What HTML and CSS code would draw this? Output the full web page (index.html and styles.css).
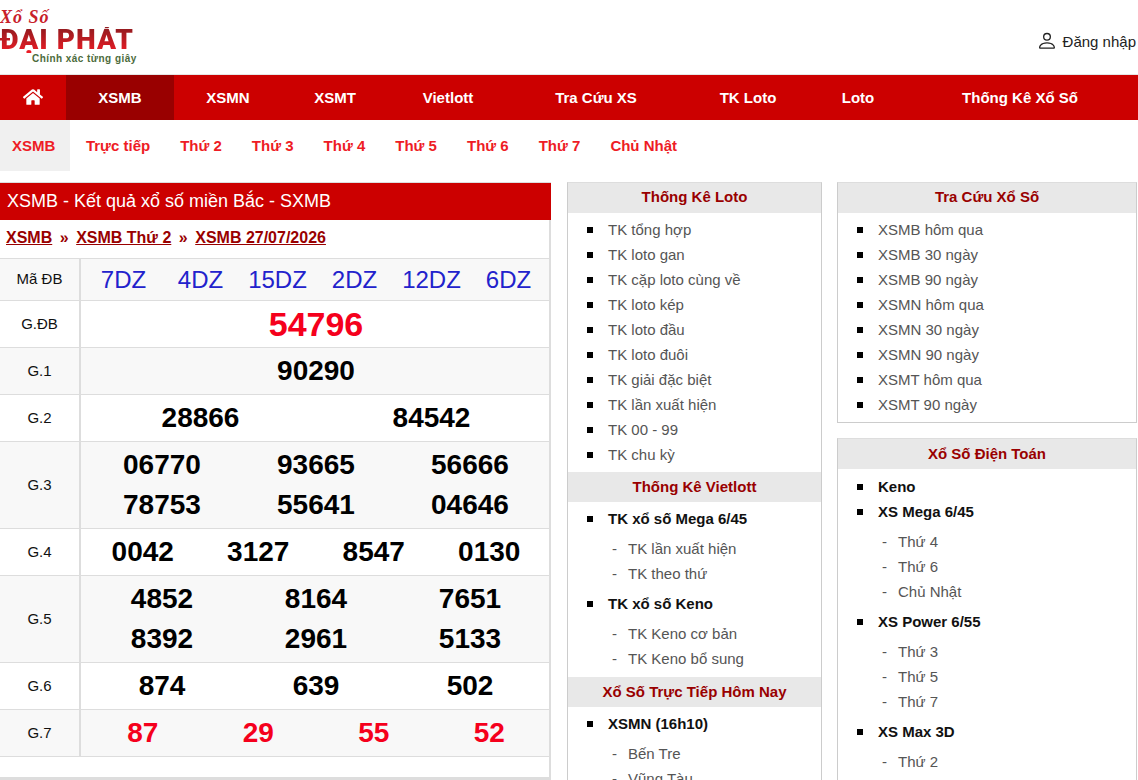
FILE: index.html
```html
<!DOCTYPE html>
<html lang="vi">
<head>
    <meta charset="UTF-8">
    <meta name="viewport" content="width=device-width, initial-scale=1.0">
    <title>XSMB - Kết quả xổ số miền Bắc</title>
    <link rel="stylesheet" href="styles.css">
</head>
<body>
    <header class="top">
        <a class="logo" href="#">
            <span class="logo-script">Xổ Số</span>
            <span class="logo-name">ĐẠI PHÁT</span>
            <span class="logo-slogan">Chính xác từng giây</span>
        </a>
        <a class="login" href="#">
            <svg class="login-icon" viewBox="2 1.5 12 12.5" fill="#222"><path d="M8 8a3 3 0 1 0 0-6 3 3 0 0 0 0 6zm2-3a2 2 0 1 1-4 0 2 2 0 0 1 4 0zm4 8c0 1-1 1-1 1H3s-1 0-1-1 1-4 6-4 6 3 6 4zm-1-.004c-.001-.246-.154-.986-.832-1.664C11.516 10.68 10.289 10 8 10c-2.29 0-3.516.68-4.168 1.332-.678.678-.83 1.418-.832 1.664h10z"/></svg>
            Đăng nhập
        </a>
    </header>

    <nav class="main-nav">
        <a href="#" class="home"><svg viewBox="0 0 576 512" fill="#fff"><path d="M280.37 148.26L96 300.11V464a16 16 0 0 0 16 16l112.06-.29a16 16 0 0 0 15.92-16V368a16 16 0 0 1 16-16h64a16 16 0 0 1 16 16v95.64a16 16 0 0 0 16 16.05L464 480a16 16 0 0 0 16-16V300L295.67 148.26a12.19 12.19 0 0 0-15.3 0zM571.6 251.47L488 182.56V44.05a12 12 0 0 0-12-12h-56a12 12 0 0 0-12 12v72.61L318.47 43a48 48 0 0 0-61 0L4.34 251.47a12 12 0 0 0-1.6 16.9l25.5 31A12 12 0 0 0 45.15 301l235.22-193.74a12.19 12.19 0 0 1 15.3 0L530.9 301a12 12 0 0 0 16.9-1.6l25.5-31a12 12 0 0 0-1.7-16.93z"/></svg></a>
        <a href="#" class="active">XSMB</a>
        <a href="#">XSMN</a>
        <a href="#">XSMT</a>
        <a href="#">Vietlott</a>
        <a href="#">Tra Cứu XS</a>
        <a href="#">TK Loto</a>
        <a href="#">Loto</a>
        <a href="#">Thống Kê Xổ Số</a>
    </nav>

    <nav class="sub-nav">
        <a href="#" class="active">XSMB</a>
        <a href="#">Trực tiếp</a>
        <a href="#">Thứ 2</a>
        <a href="#">Thứ 3</a>
        <a href="#">Thứ 4</a>
        <a href="#">Thứ 5</a>
        <a href="#">Thứ 6</a>
        <a href="#">Thứ 7</a>
        <a href="#">Chủ Nhật</a>
    </nav>

    <div class="content">
        <main class="results">
            <h1 class="results-title">XSMB - Kết quả xổ số miền Bắc - SXMB</h1>
            <div class="crumbs">
                <a href="#">XSMB</a><span class="sep">»</span><a href="#">XSMB Thứ 2</a><span class="sep">»</span><a href="#">XSMB 27/07/2026</a>
            </div>
            <div class="row row-code shade">
                <div class="label">Mã ĐB</div>
                <div class="nums codes"><span>7DZ</span><span>4DZ</span><span>15DZ</span><span>2DZ</span><span>12DZ</span><span>6DZ</span></div>
            </div>
            <div class="row">
                <div class="label">G.ĐB</div>
                <div class="nums special"><span>54796</span></div>
            </div>
            <div class="row shade">
                <div class="label">G.1</div>
                <div class="nums"><span>90290</span></div>
            </div>
            <div class="row">
                <div class="label">G.2</div>
                <div class="nums"><span>28866</span><span>84542</span></div>
            </div>
            <div class="row row-double shade">
                <div class="label">G.3</div>
                <div class="nums cols-3"><span>06770</span><span>93665</span><span>56666</span><span>78753</span><span>55641</span><span>04646</span></div>
            </div>
            <div class="row">
                <div class="label">G.4</div>
                <div class="nums"><span>0042</span><span>3127</span><span>8547</span><span>0130</span></div>
            </div>
            <div class="row row-double shade">
                <div class="label">G.5</div>
                <div class="nums cols-3"><span>4852</span><span>8164</span><span>7651</span><span>8392</span><span>2961</span><span>5133</span></div>
            </div>
            <div class="row">
                <div class="label">G.6</div>
                <div class="nums"><span>874</span><span>639</span><span>502</span></div>
            </div>
            <div class="row shade">
                <div class="label">G.7</div>
                <div class="nums red"><span>87</span><span>29</span><span>55</span><span>52</span></div>
            </div>
        </main>

        <aside class="box box-mid">
            <h3>Thống Kê Loto</h3>
            <ul class="list">
                <li><a href="#">TK tổng hợp</a></li>
                <li><a href="#">TK loto gan</a></li>
                <li><a href="#">TK cặp loto cùng về</a></li>
                <li><a href="#">TK loto kép</a></li>
                <li><a href="#">TK loto đầu</a></li>
                <li><a href="#">TK loto đuôi</a></li>
                <li><a href="#">TK giải đặc biệt</a></li>
                <li><a href="#">TK lần xuất hiện</a></li>
                <li><a href="#">TK 00 - 99</a></li>
                <li><a href="#">TK chu kỳ</a></li>
            </ul>
            <h3>Thống Kê Vietlott</h3>
            <ul class="list">
                <li><b>TK xổ số Mega 6/45</b>
                    <ul class="dash">
                        <li><a href="#">TK lần xuất hiện</a></li>
                        <li><a href="#">TK theo thứ</a></li>
                    </ul>
                </li>
                <li><b>TK xổ số Keno</b>
                    <ul class="dash">
                        <li><a href="#">TK Keno cơ bản</a></li>
                        <li><a href="#">TK Keno bổ sung</a></li>
                    </ul>
                </li>
            </ul>
            <h3>Xổ Số Trực Tiếp Hôm Nay</h3>
            <ul class="list">
                <li><b>XSMN (16h10)</b>
                    <ul class="dash">
                        <li><a href="#">Bến Tre</a></li>
                        <li><a href="#">Vũng Tàu</a></li>
                    </ul>
                </li>
            </ul>
        </aside>

        <div class="side">
            <aside class="box">
                <h3>Tra Cứu Xổ Số</h3>
                <ul class="list">
                    <li><a href="#">XSMB hôm qua</a></li>
                    <li><a href="#">XSMB 30 ngày</a></li>
                    <li><a href="#">XSMB 90 ngày</a></li>
                    <li><a href="#">XSMN hôm qua</a></li>
                    <li><a href="#">XSMN 30 ngày</a></li>
                    <li><a href="#">XSMN 90 ngày</a></li>
                    <li><a href="#">XSMT hôm qua</a></li>
                    <li><a href="#">XSMT 90 ngày</a></li>
                </ul>
            </aside>
            <aside class="box">
                <h3>Xổ Số Điện Toán</h3>
                <ul class="list">
                    <li><b>Keno</b></li>
                    <li><b>XS Mega 6/45</b>
                        <ul class="dash">
                            <li><a href="#">Thứ 4</a></li>
                            <li><a href="#">Thứ 6</a></li>
                            <li><a href="#">Chủ Nhật</a></li>
                        </ul>
                    </li>
                    <li><b>XS Power 6/55</b>
                        <ul class="dash">
                            <li><a href="#">Thứ 3</a></li>
                            <li><a href="#">Thứ 5</a></li>
                            <li><a href="#">Thứ 7</a></li>
                        </ul>
                    </li>
                    <li><b>XS Max 3D</b>
                        <ul class="dash">
                            <li><a href="#">Thứ 2</a></li>
                        </ul>
                    </li>
                </ul>
            </aside>
        </div>
    </div>
</body>
</html>
```

FILE: styles.css
```css
html, body {
    height: 780px;
    overflow: hidden;
}

body {
    margin: 0;
    font-family: 'Liberation Sans', Arial, sans-serif;
    font-size: 15px;
    color: #000;
    background: #fff;
}

a {
    text-decoration: none;
    color: inherit;
}

/* header */
.top {
    height: 74px;
    display: flex;
    justify-content: space-between;
    border-bottom: 1px solid #e5e5e5;
}

.logo {
    display: flex;
    flex-direction: column;
    width: 140px;
    white-space: nowrap;
}

.logo-script {
    margin-top: 7px;
    height: 20px;
    line-height: 20px;
    font-family: 'Liberation Serif', serif;
    font-style: italic;
    font-weight: bold;
    font-size: 18px;
    letter-spacing: 1px;
    color: #c8202a;
}

.logo-name {
    height: 26px;
    line-height: 26px;
    font-family: Roboto, 'Liberation Sans', sans-serif;
    font-size: 28px;
    font-weight: 900;
    letter-spacing: 1px;
    color: #c81420;
    background: linear-gradient(#8e1b1f, #ee1c25);
    -webkit-background-clip: text;
    background-clip: text;
    -webkit-text-fill-color: transparent;
}

.logo-slogan {
    margin-left: 32px;
    font-size: 10px;
    line-height: 11px;
    font-weight: bold;
    letter-spacing: .45px;
    color: #4c6b3c;
}

.login {
    display: flex;
    align-items: center;
    gap: 8px;
    padding-right: 2px;
    height: 26px;
    margin-top: 28px;
    font-size: 15px;
    color: #222;
}

.login-icon {
    width: 16px;
    height: 17px;
    margin-top: -1px;
}

/* menus */
.main-nav {
    height: 45px;
    display: grid;
    grid-template-columns: 66px 108px 108px 106px 120px 176px 128px 92px 232px;
    background: #c00;
}

.main-nav a {
    display: flex;
    align-items: center;
    justify-content: center;
    color: #fff;
    font-size: 15px;
    font-weight: bold;
}

.main-nav a.active {
    background: #990000;
}

.main-nav .home svg {
    width: 20px;
    height: 18px;
    margin-top: -2px;
}

.sub-nav {
    height: 51px;
    display: flex;
}

.sub-nav a {
    padding: 0 15px;
    line-height: 51px;
    color: #ee1c25;
    font-size: 15px;
    font-weight: bold;
}

.sub-nav a.active {
    padding: 0 15px 0 12px;
    margin-right: .6px;
    background: #f0f0f0;
}

/* layout */
.content {
    display: flex;
    align-items: flex-start;
    margin-top: 11px;
}

.results {
    width: 551px;
    height: 598px;
    flex-shrink: 0;
    box-sizing: border-box;
    border-top: 1px solid #ddd;
    border-right: 2px solid #ddd;
    border-bottom: 3px solid #ddd;
}

.results-title {
    margin: 0 -2px 0 0;
    height: 37px;
    padding-left: 7px;
    line-height: 36px;
    background: #c00;
    color: #fff;
    font-size: 18px;
    font-weight: normal;
}

.crumbs {
    height: 38px;
    line-height: 36px;
    padding-left: 6px;
    font-size: 16px;
    font-weight: bold;
    color: #900;
}

.crumbs a {
    text-decoration: underline;
}

.crumbs .sep {
    margin: 0 7.5px;
}

/* prize table */
.row {
    display: flex;
    height: 46px;
    border-top: 1px solid #ddd;
}

.row:last-child {
    border-bottom: 1px solid #ddd;
}

.row.shade {
    background: #f8f8f8;
}

.row-code {
    height: 41px;
}

.row-double {
    height: 86px;
}

.label {
    width: 81px;
    flex-shrink: 0;
    display: flex;
    align-items: center;
    justify-content: center;
    padding-bottom: 2px;
    border-right: 2px solid #ddd;
    box-sizing: border-box;
    font-size: 15px;
    color: #111;
}

.nums {
    flex: 1;
    display: flex;
    flex-wrap: wrap;
    align-items: center;
    align-content: center;
    padding: 0 2px 0 4px;
    font-size: 28px;
    font-weight: bold;
    line-height: 40px;
}

.nums span {
    flex: 1;
    text-align: center;
}

.nums.cols-3 span {
    flex: 0 0 33.33%;
}

.codes {
    font-size: 24px;
    font-weight: normal;
    color: #2222cc;
}

.special {
    font-size: 34px;
    color: #f5001c;
}

.red {
    color: #f5001c;
}

/* sidebars */
.box {
    box-sizing: border-box;
    border: 1px solid #ccc;
    border-top-color: #ddd;
    background: #fff;
}

.box-mid {
    width: 255px;
    margin-left: 16px;
    flex-shrink: 0;
}

.side {
    width: 300px;
    margin-left: 15px;
    display: flex;
    flex-direction: column;
    gap: 15px;
}

.box h3 {
    margin: 0;
    height: 30px;
    line-height: 28px;
    background: #e8e8e8;
    text-align: center;
    color: #900;
    font-size: 15px;
    font-weight: bold;
}

.box h3 ~ h3, .box + .box h3 {
    line-height: 29px;
}

.list {
    margin: 0;
    padding: 4px 0 5px 40px;
    list-style: none;
    font-size: 15px;
    line-height: 25px;
    color: #555;
}

.box + .box .list {
    padding-top: 5px;
}

.list > li::before {
    content: "";
    display: inline-block;
    width: 6px;
    height: 6px;
    margin: 0 15px 0 -21px;
    vertical-align: 2px;
    background: #000;
}

.list b {
    color: #111;
}

.dash {
    margin: 0;
    padding: 5px 0 5px 20px;
    list-style: none;
}

.list > li:last-child .dash {
    padding-bottom: 1px;
}

.dash li::before {
    content: "-";
    display: inline-block;
    width: 20px;
    margin-left: -20px;
    padding-left: 4px;
    box-sizing: border-box;
}
```
